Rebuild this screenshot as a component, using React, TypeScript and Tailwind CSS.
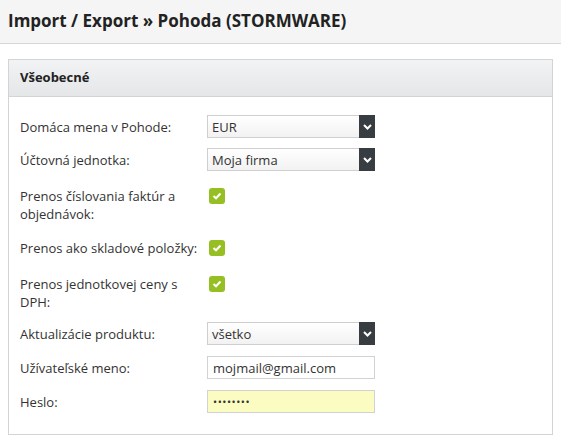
import React from 'react';

const font = { fontFamily: '"Open Sans", "Liberation Sans", sans-serif' };

function Chevron() {
  return (
    <svg width="9" height="6" viewBox="0 0 9 6" className="block">
      <path d="M1 1 L4.5 4.5 L8 1" fill="none" stroke="#fff" strokeWidth="2" />
    </svg>
  );
}

function Select({ value }: { value: string }) {
  return (
    <div className="flex h-[23px] w-[168px]">
      <div className="flex-1 flex items-center pl-[4px] border border-[#cfcfcf] border-r-0 bg-gradient-to-b from-white to-[#f2f2f2] text-[13px] text-[#333]">
        {value}
      </div>
      <div className="w-[16px] bg-[#383d41] flex items-center justify-center">
        <Chevron />
      </div>
    </div>
  );
}

function Input({ value, password }: { value: string; password?: boolean }) {
  return (
    <div
      className={
        'flex items-center h-[23px] w-[168px] pl-[5px] border border-[#d2d2d2] text-[13px] text-[#333] ' +
        (password ? 'bg-[#fafcc2]' : 'bg-white')
      }
    >
      {password ? <span className="text-[11px] tracking-[0.5px]">••••••••</span> : value}
    </div>
  );
}

function Check() {
  return (
    <div className="mt-[1px] ml-[2px] w-[16px] h-[16px] rounded-[3px] bg-[#96bf24] flex items-center justify-center">
      <svg width="10" height="8" viewBox="0 0 10 8">
        <path d="M1.5 4 L4 6.3 L8.5 1.5" fill="none" stroke="#fff" strokeWidth="2" />
      </svg>
    </div>
  );
}

export default function App() {
  return (
    <div className="min-h-[443px] bg-white text-[#333]" style={font}>
      <div className="h-[44px] bg-[#f5f5f5] border-b border-[#d6d6d6] flex items-center pl-[8px] pb-[2px]">
        <h1 className="text-[17px] font-bold text-[#222]">Import / Export » Pohoda (STORMWARE)</h1>
      </div>

      <div className="mx-[8px] mt-[15px] border border-[#d4d4d4]">
        <div className="h-[37px] border-b border-[#d4d4d4] bg-gradient-to-b from-[#f2f3f4] to-[#e4e6e7] flex items-center pl-[11px]">
          <span className="text-[13px] font-bold text-[#222]">Všeobecné</span>
        </div>

        <div className="pl-[11px] pt-[18px] pb-[21px] text-[13px] leading-[18px]">
          <div className="flex items-center">
            <label className="w-[187px]">Domáca mena v Pohode:</label>
            <Select value="EUR" />
          </div>
          <div className="flex items-center mt-[10px]">
            <label className="w-[187px]">Účtovná jednotka:</label>
            <Select value="Moja firma" />
          </div>
          <div className="flex items-start mt-[16px]">
            <label className="w-[187px] pr-[8px]">Prenos číslovania faktúr a objednávok:</label>
            <Check />
          </div>
          <div className="flex items-start mt-[16px]">
            <label className="w-[187px]">Prenos ako skladové položky:</label>
            <Check />
          </div>
          <div className="flex items-start mt-[18px]">
            <label className="w-[187px] pr-[8px]">Prenos jednotkovej ceny s DPH:</label>
            <Check />
          </div>
          <div className="flex items-center mt-[11px]">
            <label className="w-[187px]">Aktualizácie produktu:</label>
            <Select value="všetko" />
          </div>
          <div className="flex items-center mt-[11px]">
            <label className="w-[187px]">Užívateľské meno:</label>
            <Input value="mojmail@gmail.com" />
          </div>
          <div className="flex items-center mt-[11px]">
            <label className="w-[187px]">Heslo:</label>
            <Input value="" password />
          </div>
        </div>
      </div>
    </div>
  );
}
